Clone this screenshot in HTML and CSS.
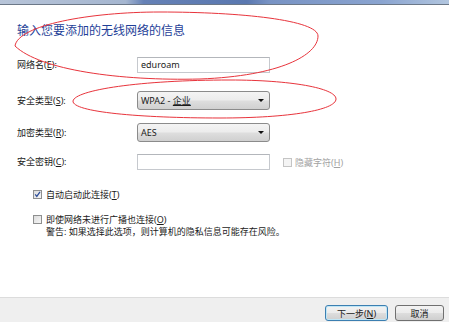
FILE: index.html
```html
<!DOCTYPE html>
<html lang="zh-CN">
<head>
    <meta charset="UTF-8">
    <title>手动连接到无线网络</title>
    <link rel="stylesheet" href="styles.css">
</head>
<body>
    <div class="window">
        <div class="titlebar"></div>

        <div class="content">
            <h1 class="instruction">输入您要添加的无线网络的信息</h1>

            <div class="field-row row-name">
                <label class="field-label">网络名(<u>E</u>):</label>
                <div class="textbox">eduroam</div>
            </div>

            <div class="field-row row-security">
                <label class="field-label">安全类型(<u>S</u>):</label>
                <div class="combo">WPA2 - <u>企业</u></div>
            </div>

            <div class="field-row row-encryption">
                <label class="field-label">加密类型(<u>R</u>):</label>
                <div class="combo">AES</div>
            </div>

            <div class="field-row row-key">
                <label class="field-label">安全密钥(<u>C</u>):</label>
                <div class="textbox"></div>
                <span class="checkbox disabled"></span>
                <span class="hide-label">隐藏字符(<u>H</u>)</span>
            </div>

            <div class="check-row row-auto">
                <span class="checkbox">
                    <svg width="7" height="7" viewBox="0 0 7 7"><path d="M1.2 3.4 L2.8 5.4 L6 0.9" fill="none" stroke="#2f4f9a" stroke-width="1.3"/></svg>
                </span>
                <span>自动启动此连接(<u>T</u>)</span>
            </div>

            <div class="check-row row-hidden">
                <span class="checkbox"></span>
                <span>即使网络未进行广播也连接(<u>O</u>)</span>
            </div>
            <div class="warning">警告: 如果选择此选项，则计算机的隐私信息可能存在风险。</div>
        </div>

        <div class="footer">
            <button class="button button-default" type="button">下一步(<u>N</u>)</button>
            <button class="button button-cancel" type="button">取消</button>
        </div>

        <!-- red hand-drawn marks over the dialog -->
        <svg class="annotations" width="449" height="322" viewBox="0 0 449 322">
            <path d="M15,46 C18,25 90,12 160,12 C240,12 318,20 318,36 C318,55 280,76 200,79 C120,81 40,70 15,46 Z"/>
            <path d="M73,101 C75,90 140,80 230,80 C290,80 336,88 336,99 C336,110 290,118 220,118 C140,118 72,112 73,101 Z"/>
        </svg>
    </div>
</body>
</html>
```

FILE: styles.css
```css
body {
    margin: 0;
    font-family: "Noto Sans", "Noto Sans CJK SC", sans-serif;
    font-size: 9px;
    color: #1b1b1b;
    background-color: #ffffff;
}
u {
    text-decoration: underline;
}
.window {
    position: relative;
    width: 449px;
    height: 322px;
    display: flex;
    flex-direction: column;
    overflow: hidden;
    background-color: #ffffff;
}
.titlebar {
    height: 4px;
    background: linear-gradient(to right, #b7c4d8 0%, #a5b6d0 28%, #6581b6 32%, #5a78b0 55%, #7893c4 60%, #8aa4d0 85%, #b2c6df 100%);
    border-bottom: 1px solid #6c7888;
}
.content {
    flex: 1;
    padding-left: 17px;
}
.instruction {
    margin: 17px 0 0;
    font-family: "Noto Sans CJK SC", sans-serif;
    font-size: 12px;
    line-height: 16px;
    font-weight: normal;
    color: #1f3f98;
}
.field-row {
    display: flex;
    align-items: center;
}
.field-label {
    width: 120px;
    line-height: 12px;
}
.row-name {
    margin-top: 19px;
    height: 16px;
}
.row-security {
    margin-top: 18px;
    height: 19px;
}
.row-encryption {
    margin-top: 13px;
    height: 19px;
}
.row-key {
    margin-top: 12px;
    height: 16px;
}
.textbox {
    width: 133px;
    height: 16px;
    box-sizing: border-box;
    border: 1px solid #c6c9ce;
    border-top-color: #b3b6bb;
    padding-left: 3px;
    line-height: 14px;
    background-color: #ffffff;
}
.combo {
    position: relative;
    width: 133px;
    height: 19px;
    box-sizing: border-box;
    border: 1px solid #8b8b8b;
    border-radius: 3px;
    padding-left: 3px;
    line-height: 17px;
    background: linear-gradient(#f4f4f4, #ececec 48%, #dedede 52%, #d0d0d0);
}
.combo::after {
    content: "";
    position: absolute;
    right: 5px;
    top: 7px;
    border-left: 3px solid transparent;
    border-right: 3px solid transparent;
    border-top: 3px solid #111111;
}
.checkbox {
    display: inline-flex;
    align-items: center;
    justify-content: center;
    width: 9px;
    height: 9px;
    box-sizing: border-box;
    border: 1px solid #8e8f8f;
    background: linear-gradient(135deg, #dcdcdc, #f6f6f6);
    flex-shrink: 0;
}
.checkbox.disabled {
    border-color: #c4c4c4;
    background: #f4f4f4;
}
.row-key .checkbox {
    margin-left: 13px;
}
.hide-label {
    margin-left: 3px;
    color: #a2a2a2;
}
.check-row {
    display: flex;
    align-items: center;
    height: 13px;
    padding-left: 16px;
}
.check-row .checkbox {
    margin-right: 4px;
}
.row-auto {
    margin-top: 18px;
}
.row-hidden {
    margin-top: 12px;
}
.warning {
    height: 12px;
    line-height: 12px;
    padding-left: 29px;
}
.footer {
    height: 17px;
    display: flex;
    justify-content: flex-end;
    align-items: flex-start;
    gap: 7px;
    padding: 7px 5px 0 0;
    border-top: 1px solid #dcdcdc;
    background-color: #efefef;
}
.button {
    height: 16px;
    padding: 0;
    box-sizing: border-box;
    border: 1px solid #707070;
    border-radius: 3px;
    font-family: "Noto Sans", "Noto Sans CJK SC", sans-serif;
    font-size: 9px;
    line-height: 13px;
    color: #1b1b1b;
    background: linear-gradient(#f3f3f3, #ebebeb 48%, #dddddd 52%, #cfcfcf);
}
.button-default {
    width: 63px;
    border-color: #3c7fb1;
    box-shadow: inset 0 0 0 1px #bfe6f6;
}
.button-cancel {
    width: 49px;
}
.annotations {
    position: absolute;
    left: 0;
    top: 0;
    pointer-events: none;
}
.annotations path {
    fill: none;
    stroke: #e8343c;
    stroke-width: 1;
}
```
